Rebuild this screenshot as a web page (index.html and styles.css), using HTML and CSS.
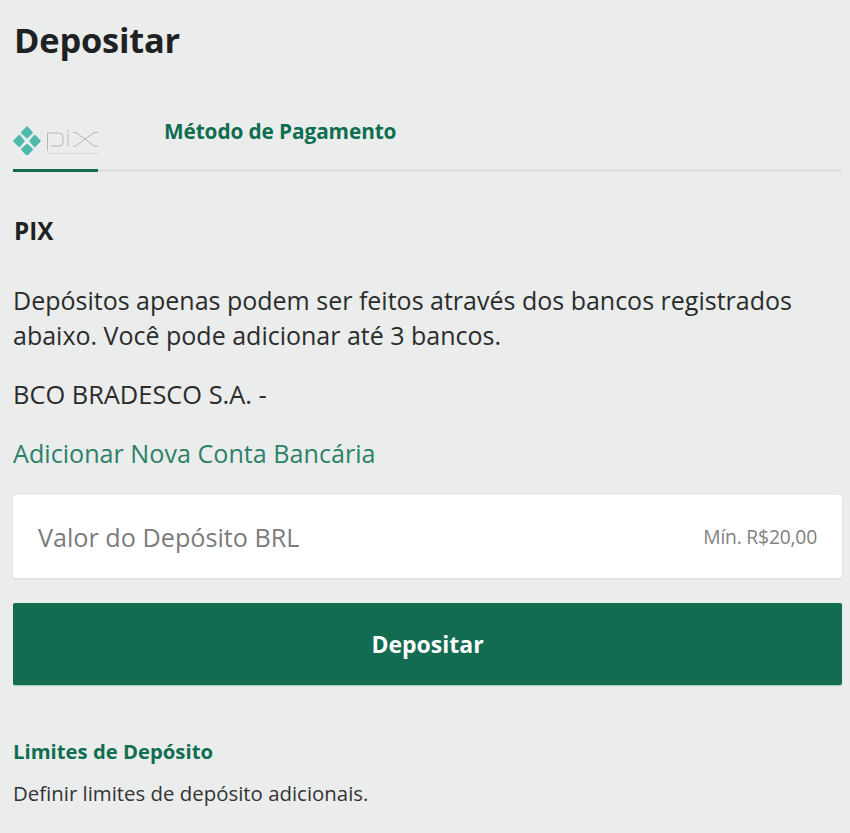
FILE: index.html
```html
<!DOCTYPE html>
<html lang="pt-BR">
<head>
<meta charset="utf-8">
<title>Depositar</title>
<link rel="stylesheet" href="styles.css">
</head>
<body>
<main class="page">
  <h1 class="title">Depositar</h1>
  <nav class="tabs">
    <a class="tab-logo">
      <svg class="pix" viewBox="0 0 85 30" width="85" height="30" aria-hidden="true">
        <g fill="#4fb9ad" stroke="#4fb9ad" stroke-width="2.2" stroke-linejoin="round">
          <path d="M14 2.4 18.8 7.6 14 12.2 9.2 7.6Z"/>
          <path d="M14 29.6 9.2 24.4 14 19.8 18.8 24.4Z"/>
          <path d="M1.4 16 6.2 11 10.6 16 6.2 21Z"/>
          <path d="M26.6 16 21.8 21 17.4 16 21.8 11Z"/>
        </g>
        <g fill="none" stroke="#b2b7b7" stroke-width="1">
          <path d="M34.5 26V8H46a4 4 0 0 1 4 4v5a4 4 0 0 1-4 4H38"/>
          <path d="M55 9V21M55 5V7.5"/>
          <path d="M60 7.5h3l9 6.5 9-6.5h4M60 21h3l9-7 9 7h4"/>
        </g>
        <path d="M34 28.5H85" stroke="#d2d5d5" stroke-width="1.2" stroke-dasharray="3 1"/>
      </svg>
    </a>
    <a class="tab-link">Método de Pagamento</a>
  </nav>
  <h2 class="method">PIX</h2>
  <p class="text info">Depósitos apenas podem ser feitos através dos bancos registrados abaixo. Você pode adicionar até 3 bancos.</p>
  <p class="text bank">BCO BRADESCO S.A. -</p>
  <a class="text add">Adicionar Nova Conta Bancária</a>
  <div class="field">
    <span class="placeholder">Valor do Depósito BRL</span>
    <span class="min">Mín. R$20,00</span>
  </div>
  <button class="submit" type="button">Depositar</button>
  <a class="limits">Limites de Depósito</a>
  <p class="limits-text">Definir limites de depósito adicionais.</p>
</main>
</body>
</html>
```
FILE: styles.css
```css
* { box-sizing: border-box; }
html, body { margin: 0; height: 100%; }
body {
  background: #ebeded;
  color: #222;
  font-family: "Open Sans", "Noto Sans", sans-serif;
  overflow: hidden;
}
.page {
  padding: 18px 8px 0 13px;
  display: flex;
  flex-direction: column;
}
.title {
  margin: 0 0 0 1px;
  font-size: 34.4px;
  line-height: 44px;
  font-weight: 700;
  color: #1f2222;
  letter-spacing: -0.2px;
}
.tabs {
  margin-top: 45px;
  display: flex;
  align-items: flex-start;
  border-bottom: 3px solid #dfe1e1;
  height: 65px;
}
.tab-logo {
  width: 85px;
  height: 65px;
  border-bottom: 3px solid #14694f;
  padding-top: 18px;
  flex: none;
}
.pix { display: block; }
.tab-link {
  margin-left: 66px;
  margin-top: 11px;
  font-size: 20.8px;
  line-height: 26px;
  font-weight: 700;
  color: #0f6d50;
  letter-spacing: -0.1px;
}
.method {
  margin: 44px 0 0 1px;
  font-size: 24.2px;
  line-height: 30px;
  font-weight: 700;
  color: #1f2222;
}
.text {
  font-size: 25px;
  line-height: 35px;
  color: #2a2c2c;
  margin: 0;
}
.info { margin-top: 37px; }
.bank { margin-top: 24px; font-size: 25.4px; }
.add { margin-top: 24px; color: #2e8068; font-size: 25.15px; }
.field {
  margin-top: 24px;
  height: 83px;
  background: #fff;
  border-radius: 2px;
  box-shadow: 0 1px 2px #d5d7d7;
  padding: 0 25px;
  display: flex;
  align-items: center;
  justify-content: space-between;
}
.placeholder { font-size: 25.2px; color: #7a7c7c; }
.min { font-size: 19.3px; color: #808282; letter-spacing: -0.2px; }
.submit {
  margin-top: 25px;
  height: 82px;
  border: 0;
  border-radius: 2px;
  background: #136b52;
  color: #fff;
  font: 700 23px "Open Sans", "Noto Sans", sans-serif;
  box-shadow: 0 1px 1px #9ccbb9;
}
.limits {
  margin-top: 53px;
  font-size: 20.3px;
  line-height: 26px;
  font-weight: 700;
  color: #0f6d50;
}
.limits-text {
  margin: 16px 0 0;
  font-size: 20.4px;
  line-height: 26px;
  color: #333;
}
```
